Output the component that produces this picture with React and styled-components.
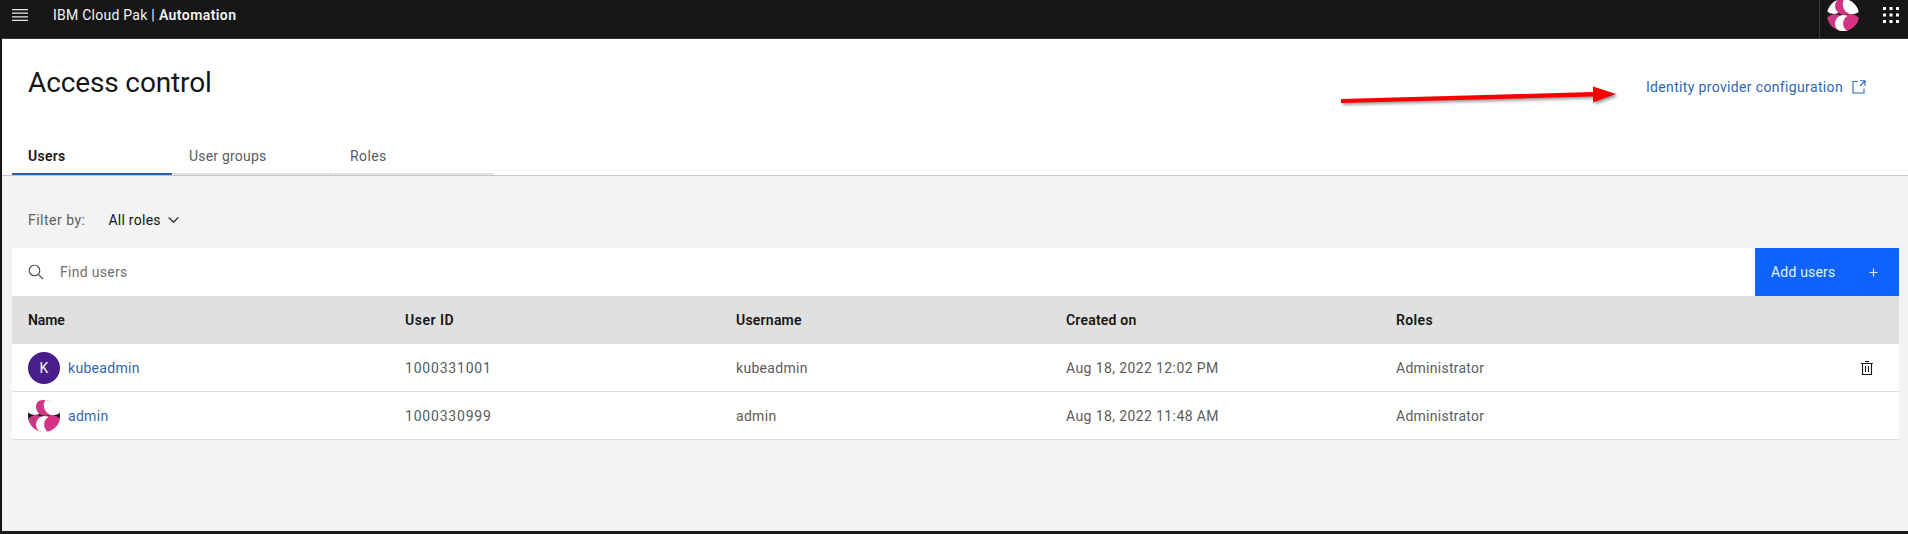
import React from "react";
import styled, { createGlobalStyle } from "styled-components";

const GlobalStyle = createGlobalStyle`
  * { box-sizing: border-box; }
  body {
    margin: 0;
    background: #f3f3f3;
    font-family: Roboto, "Liberation Sans", sans-serif;
    font-size: 14px;
    line-height: 18px;
    color: #161616;
  }
`;

const Page = styled.div`
  height: 534px;
  display: flex;
  flex-direction: column;
  border-left: 2px solid #161616;
  border-bottom: 3px solid #1c1c1e;
  background: #f3f3f3;
  overflow: hidden;
`;

const Text = styled.span`
  letter-spacing: ${(p) => p.$spacing ?? 0.3}px;
  font-weight: ${(p) => (p.$bold ? 600 : 400)};
  white-space: nowrap;
`;

const TopBar = styled.header`
  flex: none;
  height: 39px;
  display: flex;
  align-items: flex-start;
  background: #161616;
  border-bottom: 1px solid #393939;
  color: #f4f4f4;
`;

const MenuIcon = styled.svg`
  margin: 9px 25px 0 10px;
`;

const Brand = styled.div`
  display: flex;
  gap: 4px;
  padding-top: 6px;
`;

const TopActions = styled.div`
  margin-left: auto;
  height: 38px;
  display: flex;
  align-items: flex-start;
  gap: 24px;
  padding: 0 9px 0 7px;
  border-left: 1px solid #393939;
`;

const TopAvatar = styled.div`
  height: 38px;
  margin-top: -1px;
`;

const DotsIcon = styled.svg`
  margin-top: 7px;
`;

const PageHeader = styled.section`
  flex: none;
  height: 137px;
  display: flex;
  flex-direction: column;
  justify-content: space-between;
  background: #fff;
  border-bottom: 1px solid #c6c6c6;
`;

const TitleRow = styled.div`
  display: flex;
  justify-content: space-between;
  padding: 26px 42px 0 26px;
`;

const Title = styled.h1`
  margin: 0;
  font-size: 28px;
  line-height: 36px;
  font-weight: 400;
  letter-spacing: -0.13px;
`;

const ConfigLink = styled.a`
  display: flex;
  align-items: center;
  gap: 9px;
  height: 18px;
  margin-top: 13px;
  color: #2f67b1;
`;

const Tabs = styled.nav`
  display: flex;
  gap: 1px;
  padding-left: 10px;
`;

const Tab = styled.div`
  width: 160px;
  height: 40px;
  padding: 12px 16px 0;
  color: ${(p) => (p.$active ? "#161616" : "#5c5c5c")};
  border-bottom: 2px solid ${(p) => (p.$active ? "#2c5fb8" : "#e0e0e0")};
`;

const Content = styled.main`
  padding: 35px 9px 0 10px;
`;

const FilterRow = styled.div`
  display: flex;
  align-items: center;
  height: 18px;
  padding-left: 16px;
  margin-bottom: 19px;
  color: #5c5c5c;
`;

const FilterSelect = styled.div`
  display: flex;
  align-items: center;
  gap: 7px;
  margin-left: 23px;
  color: #161616;
`;

const Toolbar = styled.div`
  display: flex;
  height: 48px;
  background: #fff;
`;

const Search = styled.div`
  flex: 1;
  display: flex;
  align-items: center;
  gap: 16px;
  padding-left: 16px;
  color: #6f6f6f;
`;

const AddButton = styled.div`
  width: 144px;
  display: flex;
  align-items: center;
  justify-content: space-between;
  padding: 0 21px 0 16px;
  background: #0f62fe;
  color: #e3f1ff;
`;

const Row = styled.div`
  display: grid;
  grid-template-columns: 377px 331px 330px 330px 1fr 39px;
  align-items: center;
  height: 48px;
  padding-left: 16px;
  background: ${(p) => (p.$head ? "#e0e0e0" : "#fff")};
  color: ${(p) => (p.$head ? "#161616" : "#5c5c5c")};
  border-bottom: ${(p) => (p.$head ? "0" : "1px solid #dcdcdc")};
`;

const NameCell = styled.div`
  display: flex;
  align-items: center;
  gap: 8px;
  color: #2f67b1;
`;

const Initial = styled.div`
  width: 32px;
  height: 32px;
  border-radius: 50%;
  display: flex;
  align-items: center;
  justify-content: center;
  background: #491d8b;
  color: #fff;
`;

const AvatarSvg = styled.svg`
  display: block;
`;

function Avatar({ id }) {
  return (
    <AvatarSvg width="32" height="32" viewBox="0 0 32 32">
      <clipPath id={id}>
        <circle cx="16" cy="16" r="16" />
      </clipPath>
      <g clipPath={`url(#${id})`}>
        <rect y="11" width="32" height="9" fill="#1b1b22" />
        <circle cx="8" cy="24.500" r="9.500" fill="#c73a82" />
        <circle cx="23" cy="24.500" r="9.500" fill="#d63384" />
        <ellipse cx="7" cy="5.500" rx="10.500" ry="9.500" fill="#fff" />
        <circle cx="17" cy="7" r="9" fill="#cf3680" />
        <circle cx="25.500" cy="5.500" r="9.800" fill="#fff" />
        <circle cx="16.500" cy="24.500" r="8.500" fill="#fff" />
        <circle cx="25" cy="24.500" r="9" fill="#d63384" />
      </g>
    </AvatarSvg>
  );
}

const columns = [
  ["Name", -0.1],
  ["User ID", 0.51],
  ["Username", 0.22],
  ["Created on", 0.2],
  ["Roles", 0.38],
];

const users = [
  { name: "kubeadmin", id: "1000331001", created: "Aug 18, 2022 12:02 PM", initial: "K", removable: true },
  { name: "admin", id: "1000330999", created: "Aug 18, 2022 11:48 AM" },
];

const TrashIcon = () => (
  <svg width="14" height="16" viewBox="0 0 14 16" fill="none" stroke="#161616">
    <path d="M5 1.500h4M1 3.500h12M2.500 3.500v11h9v-11M5.500 6v6M8.500 6v6" strokeWidth="1.100" />
  </svg>
);

const ArrowCanvas = styled.svg`
  position: absolute;
  left: 1330px;
  top: 67px;
  filter: drop-shadow(2px 2px 1.5px rgba(0, 0, 0, 0.4));
`;

export default function App() {
  return (
    <Page>
      <GlobalStyle />
      <TopBar>
        <MenuIcon width="16" height="12" viewBox="0 0 16 12" fill="#e6e6e6">
          <path d="M0 0h16v1.200H0zM0 3.500h16v1.300H0zM0 7.200h16v1.300H0zM0 10.800h16v1.200H0z" />
        </MenuIcon>
        <Brand>
          <Text $spacing={0.25}>IBM Cloud Pak |</Text>
          <Text $bold $spacing={0.42}>Automation</Text>
        </Brand>
        <TopActions>
          <TopAvatar><Avatar id="avatar-top" /></TopAvatar>
          <DotsIcon width="16" height="16" viewBox="0 0 16 16" fill="#fff">
            {[0, 6.5, 13].map((y) => [0, 6.5, 13].map((x) => <rect key={`${x}-${y}`} x={x} y={y} width="3" height="3" />))}
          </DotsIcon>
        </TopActions>
      </TopBar>
      <PageHeader>
        <TitleRow>
          <Title>Access control</Title>
          <ConfigLink>
            <Text $spacing={0.35}>Identity provider configuration</Text>
            <svg width="14" height="14" viewBox="0 0 14 14" fill="none" stroke="#2f67b1" strokeWidth="1.100">
              <path d="M6 1.500H1v11.500H12V8.500M8 .800h5V6M13 .800L8 6" />
            </svg>
          </ConfigLink>
        </TitleRow>
        <Tabs>
          <Tab $active><Text $bold $spacing={0.26}>Users</Text></Tab>
          <Tab><Text $spacing={0.2}>User groups</Text></Tab>
          <Tab><Text $spacing={0.39}>Roles</Text></Tab>
        </Tabs>
      </PageHeader>
      <Content>
        <FilterRow>
          <Text $spacing={0.48}>Filter by:</Text>
          <FilterSelect>
            <Text $spacing={0.27}>All roles</Text>
            <svg width="11" height="6" viewBox="0 0 11 6" fill="none" stroke="#262626" strokeWidth="1.200">
              <path d="M.7.500l4.800 4.700L10.300.500" />
            </svg>
          </FilterSelect>
        </FilterRow>
        <Toolbar>
          <Search>
            <svg width="16" height="16" viewBox="0 0 16 16" fill="none" stroke="#4a4a4a" strokeWidth="1.100">
              <circle cx="6.500" cy="6.500" r="5.300" />
              <path d="M10.400 10.400l4.600 4.600" />
            </svg>
            <Text $spacing={0.29}>Find users</Text>
          </Search>
          <AddButton>
            <Text $spacing={0.19}>Add users</Text>
            <svg width="9" height="9" viewBox="0 0 9 9" stroke="#e3f1ff" strokeWidth="1.200">
              <path d="M4.500 0.500v8M0.500 4.500h8" />
            </svg>
          </AddButton>
        </Toolbar>
        <Row $head>
          {columns.map(([label, spacing]) => <Text key={label} $bold $spacing={spacing}>{label}</Text>)}
        </Row>
        {users.map((u) => (
          <Row key={u.id}>
            <NameCell>
              {u.initial ? <Initial>{u.initial}</Initial> : <Avatar id="avatar-row" />}
              <Text>{u.name}</Text>
            </NameCell>
            <Text $spacing={0.8}>{u.id}</Text>
            <Text>{u.name}</Text>
            <Text $spacing={0.39}>{u.created}</Text>
            <Text $spacing={0.26}>Administrator</Text>
            {u.removable && <TrashIcon />}
          </Row>
        ))}
      </Content>
      <ArrowCanvas width="300" height="42" viewBox="0 0 300 42">
        <path d="M11 32L263 25V19.500L286 27L263 35.500V29.500L11 36z" fill="#f80000" />
      </ArrowCanvas>
    </Page>
  );
}
